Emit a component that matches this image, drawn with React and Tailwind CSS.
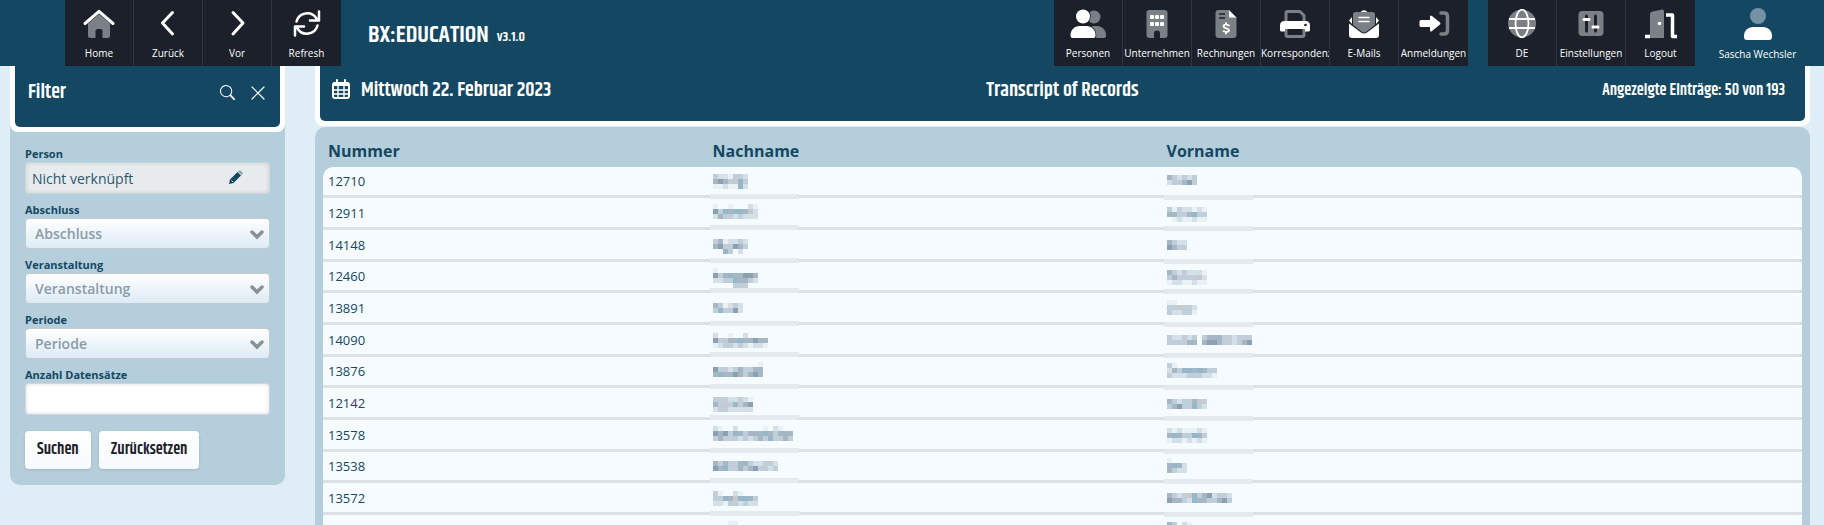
import React, { useState } from 'react';
import { BsSearch } from 'react-icons/bs';

const GREY = '#7b7f86';

// Duotone icons, all drawn on a 36x30 canvas
const icons = {
  home: (
    <>
      <path fill={GREY} d="M18 5 7 14.500V26.500Q7 29 9.500 29H14.500V22Q14.500 20 16.500 20H19.500Q21.500 20 21.500 22V29H26.500Q29 29 29 26.500V14.500Z" />
      <path fill="none" stroke="#fff" strokeWidth="3" strokeLinecap="round" strokeLinejoin="round" d="M4 14.500 18 2.300 32 14.500" />
    </>
  ),
  back: <path fill="none" stroke="#fff" strokeWidth="3" strokeLinecap="round" strokeLinejoin="round" d="M22.500 3.500 12.500 14 22.500 25" />,
  forward: <path fill="none" stroke="#fff" strokeWidth="3" strokeLinecap="round" strokeLinejoin="round" d="M14 3.500 24 14 14 25" />,
  refresh: (
    <g fill="none" stroke="#fff" strokeWidth="2.500" strokeLinecap="round" strokeLinejoin="round">
      <path d="M7.500 12.500A11 11 0 0 1 27.500 9.500M30 2.500V11.500H21" />
      <path d="M28.500 16.500A11 11 0 0 1 8.500 19.500M6 26.500V17.500H15" />
    </g>
  ),
  people: (
    <>
      <g fill={GREY}>
        <circle cx="24" cy="8" r="6.500" />
        <path d="M22 17h5c5 0 9 4 9 9v1q0 2-2 2H22z" />
      </g>
      <g fill="#fff" stroke="#1b202a" strokeWidth="1.500" paintOrder="stroke">
        <circle cx="13" cy="7.500" r="7" />
        <path d="M9.500 17h7c5 0 9 4 9 9v1q0 2-2 2h-21q-2 0-2-2v-1c0-5 4-9 9-9z" />
      </g>
    </>
  ),
  building: (
    <>
      <path fill={GREY} d="M10.500 1h15q3 0 3 3v22q0 3-3 3H21v-4.500a3 3 0 0 0-6 0V29h-4.500q-3 0-3-3V4q0-3 3-3z" />
      <g fill="#fff">
        <rect x="11" y="6" width="4" height="4" rx="1" />
        <rect x="16" y="6" width="4" height="4" rx="1" />
        <rect x="21" y="6" width="4" height="4" rx="1" />
        <rect x="11" y="13" width="4" height="4" rx="1" />
        <rect x="16" y="13" width="4" height="4" rx="1" />
        <rect x="21" y="13" width="4" height="4" rx="1" />
      </g>
    </>
  ),
  invoice: (
    <>
      <path fill={GREY} d="M10.500 1H21v7h7.500v18q0 3-3 3h-15q-3 0-3-3V4q0-3 3-3z" />
      <path fill="#fff" d="M21 1l7.500 7.500H21z" />
      <path stroke="#1b202a" strokeWidth="1.500" d="M11 5h6M11 9h6" />
      <path fill="none" stroke="#fff" strokeWidth="1.800" strokeLinecap="round" d="M21 16.500c-2-1.200-5.500-1.200-5.500.8 0 2.500 5.500 1.500 5.500 4 0 2.200-3.500 2-5.500.8M18 14v1.500M18 23v1.500" />
    </>
  ),
  printer: (
    <>
      <path fill="none" stroke={GREY} strokeWidth="3" strokeLinejoin="round" d="M9 14V4q0-1.500 1.500-1.500H23l4 4V14M9 20v6q0 1.500 1.500 1.500h15q1.500 0 1.500-1.500v-6" />
      <path fill="#fff" d="M7.500 12h21q4.500 0 4.500 4.500V21q0 1.500-1.500 1.500H28V20H8v2.500H4.500Q3 22.500 3 21v-4.500Q3 12 7.500 12z" />
      <circle cx="28.500" cy="16" r="1.300" fill="#1b202a" />
    </>
  ),
  mail: (
    <>
      <path fill="#fff" d="M14 3.500Q18-1 22 3.500zM6 8v7l-3-3.500zM30 8v7l3-3.500z" />
      <path fill={GREY} d="M9.500 3h17q2.500 0 2.500 2.500V16l-9 7q-2 1.200-4 0l-9-7V5.500Q7 3 9.500 3z" />
      <path stroke="#fff" strokeWidth="1.600" strokeLinecap="round" d="M13 8.500h10M13 12.500h10" />
      <path fill="#fff" d="M3 14.500l12 9q3 2 6 0l12-9V26q0 3-3 3H6q-3 0-3-3z" />
    </>
  ),
  login: (
    <>
      <path fill="none" stroke={GREY} strokeWidth="3.500" strokeLinecap="round" d="M25 4h3q3.500 0 3.500 3.500v14Q31.500 25 28 25h-3" />
      <path fill="#fff" d="M5 11h9V8q0-2.500 2-1l8 6.500q1 1 0 2l-8 6.500q-2 1.500-2-1v-3H5q-1.500 0-1.500-1.500v-4Q3.500 11 5 11z" />
    </>
  ),
  globe: (
    <>
      <circle cx="18" cy="14.500" r="14" fill={GREY} />
      <g fill="none" stroke="#fff" strokeWidth="1.800">
        <ellipse cx="18" cy="14.500" rx="6.500" ry="13.800" />
        <path d="M5 10h26M5 19h26" />
      </g>
    </>
  ),
  settings: (
    <>
      <rect x="5.500" y="2" width="25" height="25" rx="4" fill={GREY} />
      <g strokeLinecap="round" strokeWidth="3" fill="none">
        <path stroke="#1b202a" d="M13.500 7v15M22.500 7v15" />
        <path stroke="#fff" d="M11 10.500h5M20 18h5" />
      </g>
    </>
  ),
  logout: (
    <>
      <path fill={GREY} d="M7 5q0-1.800 1.800-2.200L19 .5q2-.5 2 1.500V29H7z" />
      <path fill="none" stroke="#fff" strokeWidth="3.500" strokeLinejoin="round" d="M23 6h6.500v21.500H34M2 27.500h5" />
      <circle cx="16.500" cy="14.500" r="1.800" fill="#fff" />
    </>
  ),
  user: (
    <>
      <circle cx="18" cy="8" r="8" fill="#7592a3" />
      <path fill="#fff" d="M13 19h10c5 0 9 3.500 9 9v1q0 3-3 3H7q-3 0-3-3v-1c0-5.500 4-9 9-9z" />
    </>
  ),
};

const leftNav = [
  { icon: 'home', label: 'Home' },
  { icon: 'back', label: 'Zurück' },
  { icon: 'forward', label: 'Vor' },
  { icon: 'refresh', label: 'Refresh' },
];

const moduleNav = [
  { icon: 'people', label: 'Personen' },
  { icon: 'building', label: 'Unternehmen' },
  { icon: 'invoice', label: 'Rechnungen' },
  { icon: 'printer', label: 'Korrespondenz' },
  { icon: 'mail', label: 'E-Mails' },
  { icon: 'login', label: 'Anmeldungen' },
];

const systemNav = [
  { icon: 'globe', label: 'DE' },
  { icon: 'settings', label: 'Einstellungen' },
  { icon: 'logout', label: 'Logout' },
];

// Shades of the masked names, one character for each 5px block
const SHADES = {
  1: '#e9f1f6',
  2: '#d4e0e8',
  3: '#bfced9',
  4: '#a5b7c5',
  5: '#8ba0b1',
  b: '#94b7ca',
  w: '#cbc8ca',
};

const rows = [
  { nr: '12710', last: [7, '3221332', '4543wb3', '11211b2'], first: [8, '432323', '233453'] },
  { nr: '12911', last: [5, '1..1...21', '53b4bb4w2', '243323222'], first: [8, '31322121', '44334b33', '.1211211'] },
  { nr: '14148', last: [8, '3412232', '4533543', '..b3.2.'], first: [9, '4322', '5433'] },
  { nr: '12460', last: [6, '1........', '534b44554', '2233b4432', '....333..'], first: [8, '43232221', '343333w2', '12211211'] },
  { nr: '13891', last: [9, '431232', '3b3352'], first: [6, '11....', '33w332', '322331'] },
  { nr: '14090', last: [7, '2..1..2....', '53344b44544', '12332321221'], first: [9, '322323.3444332333', '333344.4554332345'] },
  { nr: '13876', last: [5, '.........1', '5332343344', '4b44543454'], first: [6, '31........', '243bb4b433', '3222333221'] },
  { nr: '12142', last: [8, '33322321', '43w34345', '23322222'], first: [10, '432334w3', '34533b32'] },
  { nr: '13578', last: [5, '21..2.....1.21..', '5453b43444b43444', '34333232343b3343'], first: [7, '21211121', '4b433b43', '12212121'] },
  { nr: '13538', last: [9, '4343344322332', '54b3343453323'], first: [6, '1...', '4b42', '4322'] },
  { nr: '13572', last: [7, '31..21...', '33b4wbb43', '221332322'], first: [9, '4323wb3452332', '54432b4433453'] },
  { nr: '14155', last: [5, '...11', '11121'], first: [6, '43.21', '32121'] },
];

function MaskedName({ blocks, label, strip }) {
  const [top, ...lines] = blocks;
  return (
    <svg className="block overflow-visible" width="90" height="28" role="img" aria-label={label}>
      <rect x="-3" y={strip} width="89" height="5" fill="#e5eaee" />
      {lines.map((line, y) =>
        [...line].map((c, x) =>
          SHADES[c] ? (
            <rect key={`${x}-${y}`} x={x * 5} y={top + y * 5} width="5" height="5" fill={SHADES[c]} />
          ) : null
        )
      )}
    </svg>
  );
}

function NavButton({ icon, label }) {
  return (
    <button
      type="button"
      className="flex h-[66px] w-[69px] flex-col items-center border-r border-[#30353f] bg-[#1b202a] pt-[9px] text-white last:border-r-0"
    >
      <svg width="36" height="30" viewBox="0 0 36 30">
        {icons[icon]}
      </svg>
      <span className="mt-[6px] max-w-full overflow-hidden text-[10px] leading-4 font-medium whitespace-nowrap">{label}</span>
    </button>
  );
}

function NavGroup({ items }) {
  return (
    <nav className="flex">
      {items.map((item) => (
        <NavButton key={item.label} {...item} />
      ))}
    </nav>
  );
}

function TopBar() {
  return (
    <header className="flex h-[66px] bg-[#144862] pl-[65px] text-white">
      <NavGroup items={leftNav} />
      <div className="flex items-center gap-2 pt-1 pl-[27px] font-[Khand,'Roboto_Condensed','Liberation_Sans_Narrow',sans-serif] font-semibold">
        <span className="text-[24px]">BX:EDUCATION</span>
        <span className="pt-1 text-[14px]">v3.1.0</span>
      </div>
      <div className="ml-auto flex gap-5">
        <NavGroup items={moduleNav} />
        <NavGroup items={systemNav} />
      </div>
      <button type="button" className="flex w-[129px] flex-col items-center pt-2 pr-1 text-[10px] leading-4 font-medium">
        <svg width="36" height="32" viewBox="0 0 36 32">
          {icons.user}
        </svg>
        <span className="mt-[6px]">Sascha Wechsler</span>
      </button>
    </header>
  );
}

function SelectField({ id, label }) {
  return (
    <div>
      <label htmlFor={id} className="block text-[11px] leading-4 font-bold">
        {label}
      </label>
      <div className="relative">
        <select
          id={id}
          className="block h-[31px] w-full appearance-none rounded border border-[#c3ccd4] bg-linear-to-b from-white to-[#dcebf5] px-[9px] text-[14px] font-semibold text-[#8a9baa]"
        >
          <option>{label}</option>
        </select>
        <svg className="pointer-events-none absolute top-3 right-[6px]" width="14" height="10" viewBox="0 0 14 10">
          <path fill="none" stroke="#8b9094" strokeWidth="3.500" strokeLinecap="round" d="M2 2l5 5 5-5" />
        </svg>
      </div>
    </div>
  );
}

function FilterPanel() {
  const [count, setCount] = useState('');

  return (
    <aside className="w-[275px] shrink-0 self-start rounded-b-[10px] bg-[#b5cedb]">
      <div className="rounded-b-[8px] bg-white px-[5px] pb-[5px]">
        <div className="flex h-[61px] items-start justify-between rounded-b-[5px] bg-[#144862] pt-[15px] pr-[15px] pl-[13px] text-white">
          <h2 className="font-[Khand,'Roboto_Condensed','Liberation_Sans_Narrow',sans-serif] text-[20px] leading-6 font-semibold">Filter</h2>
          <div className="flex gap-4 pt-1">
            <button type="button" aria-label="Suchen">
              <BsSearch size={15} />
            </button>
            <button type="button" aria-label="Schliessen">
              <svg width="14" height="14" viewBox="0 0 14 14">
                <path stroke="#fff" strokeWidth="1.200" strokeLinecap="round" d="M1 1l12 12M13 1L1 13" />
              </svg>
            </button>
          </div>
        </div>
      </div>
      <form
        className="flex flex-col gap-2 px-[15px] pt-[14px] pb-4 text-[#144862]"
        onSubmit={(e) => e.preventDefault()}
      >
        <div>
          <label htmlFor="person" className="block text-[11px] leading-4 font-bold">
            Person
          </label>
          <div className="relative">
            <input
              id="person"
              readOnly
              value="Nicht verknüpft"
              className="block h-8 w-full rounded border border-[#cfd6db] bg-[#e7ebee] px-[6px] text-[14px] text-[#2b5870] shadow-[inset_0_0_4px_#00000020]"
            />
            <svg className="absolute top-2 right-[27px]" width="15" height="15" viewBox="0 0 15 15">
              <path fill="#144862" d="M1 14l1-4.500L9.500 2l3.500 3.500-7.500 7.500z" />
              <path fill="#8ea6b4" d="M10 1.500l.8-.8q1-1 2 0l1.500 1.500q1 1 0 2l-.8.8z" />
              <path stroke="#e7ebee" d="M3.500 10.500l1.500 1.500" />
            </svg>
          </div>
        </div>
        <SelectField id="abschluss" label="Abschluss" />
        <SelectField id="veranstaltung" label="Veranstaltung" />
        <SelectField id="periode" label="Periode" />
        <div>
          <label htmlFor="anzahl" className="block text-[11px] leading-4 font-bold">
            Anzahl Datensätze
          </label>
          <input
            id="anzahl"
            value={count}
            onChange={(e) => setCount(e.target.value)}
            className="block h-8 w-full rounded border border-[#cfd6db] bg-white px-[6px] text-[14px] shadow-[inset_0_0_4px_#00000020]"
          />
        </div>
        <div className="mt-2 flex gap-2 font-[Khand,'Roboto_Condensed','Liberation_Sans_Narrow',sans-serif] text-[16px] font-semibold text-[#1b202a]">
          <button type="submit" className="h-[38px] rounded bg-linear-to-b from-white to-[#f7fafd] px-3 shadow-sm">
            Suchen
          </button>
          <button type="reset" className="h-[38px] rounded bg-linear-to-b from-white to-[#f7fafd] px-3 shadow-sm">
            Zurücksetzen
          </button>
        </div>
      </form>
    </aside>
  );
}

function CalendarIcon() {
  return (
    <svg width="18" height="20" viewBox="0 0 18 20">
      <path fill="none" stroke="#fff" strokeWidth="2" strokeLinecap="round" d="M5 1v3M13 1v3" />
      <rect x="1" y="4" width="16" height="15" rx="2" fill="none" stroke="#fff" strokeWidth="2" />
      <rect x="1" y="3" width="16" height="4" rx="1.500" fill="#fff" />
      <path stroke="#fff" strokeWidth="1.400" d="M1 11h16M1 15h16M6 7v12M12 7v12" />
    </svg>
  );
}

function RecordsPanel() {
  return (
    <main className="min-w-0 flex-1">
      <div className="rounded-b-[8px] bg-white px-[5px] pb-[5px]">
        <div className="grid h-[55px] grid-cols-[1fr_auto_1fr] items-start rounded-b-[5px] bg-[#144862] pt-[13px] font-[Khand,'Roboto_Condensed','Liberation_Sans_Narrow',sans-serif] text-[20px] leading-6 font-semibold text-white">
          <div className="flex items-start gap-[11px] pl-3">
            <CalendarIcon />
            <span>Mittwoch 22. Februar 2023</span>
          </div>
          <h1>Transcript of Records</h1>
          <span className="pr-5 text-right text-[16px]">Angezeigte Einträge: 50 von 193</span>
        </div>
      </div>
      <div className="mt-px rounded-t-[10px] bg-[#b5cedb] px-2 text-[#144862]">
        <table className="w-full table-fixed border-separate border-spacing-0 text-left">
          <thead>
            <tr className="h-10 text-[16px]">
              <th className="w-[26%] px-[5px] pt-2 pb-0 font-bold">Nummer</th>
              <th className="w-[454px] px-[5px] pt-2 pb-0 font-bold">Nachname</th>
              <th className="px-[5px] pt-2 pb-0 font-bold">Vorname</th>
            </tr>
          </thead>
          <tbody className="[&_td]:border-b-[3px] [&_td]:border-[#dce1e6] [&_td]:bg-[#f6fbff]">
            {rows.map((row, i) => (
              <tr key={row.nr} className="h-8 text-[13px] leading-5 nth-[3n+1]:h-[31px] [&:first-child>td:first-child]:rounded-tl-[10px] [&:first-child>td:last-child]:rounded-tr-[10px]">
                <td className="px-[5px] py-0">{row.nr}</td>
                <td className="px-[5px] py-0">
                  <MaskedName blocks={row.last} label="Nachname" strip={i % 2 ? 26 : 27} />
                </td>
                <td className="px-[5px] py-0">
                  <MaskedName blocks={row.first} label="Vorname" strip={i % 2 ? 27 : 28} />
                </td>
              </tr>
            ))}
          </tbody>
        </table>
      </div>
    </main>
  );
}

function App() {
  return (
    <div className="h-screen overflow-hidden bg-[#deedf6] font-['Open_Sans',sans-serif]">
      <TopBar />
      <div className="flex gap-[30px] pr-[14px] pl-[10px]">
        <FilterPanel />
        <RecordsPanel />
      </div>
    </div>
  );
}

export default App;
